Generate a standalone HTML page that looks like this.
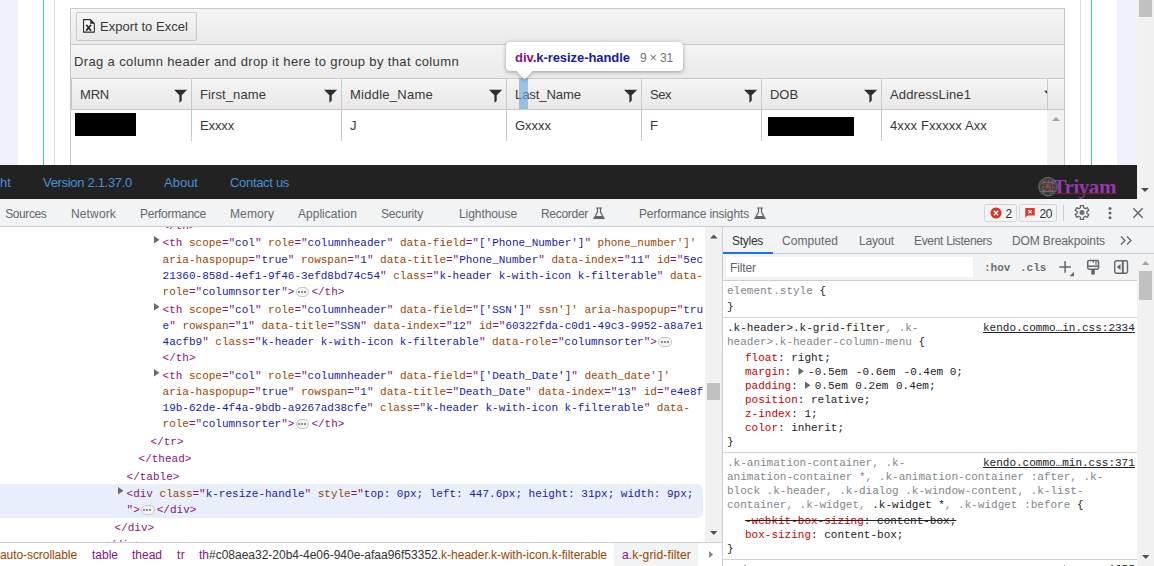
<!DOCTYPE html>
<html><head><meta charset="utf-8">
<style>
*{box-sizing:border-box;margin:0;padding:0}
html,body{width:1154px;height:566px;overflow:hidden;background:#fff}
body{position:relative;font-family:"Liberation Sans",sans-serif;font-size:14px;color:#2e2e2e}
.a{position:absolute}
.t{position:absolute;white-space:nowrap;line-height:16px;height:16px}
/* ---------- page ---------- */
.os{font-size:13px;color:#383838}
.vl{position:absolute;width:1px;background:#c9c9c9}
.flt{position:absolute;width:14px;height:14px}
/* ---------- devtools ---------- */
.ui{font-size:12px;color:#64686d}
.m{font-family:"Liberation Mono",monospace;font-size:11px;letter-spacing:0;white-space:pre;position:absolute;line-height:16px;height:16px}
.tg{color:#881280}.an{color:#994500}.av{color:#1a1aa6}.gr{color:#5f6368}
.pn{color:#c80000}.pv{color:#202124}.sel{color:#202124}.dim{color:#80868b}
.el{display:inline-block;width:13.500px;height:9.500px;border:1px solid #c6c6c6;border-radius:5px;background:#f4f4f4;vertical-align:-1.500px;margin:0 2px 0 1.500px;position:relative}
.el:after{content:"";position:absolute;left:1.200px;top:2.800px;width:2px;height:2px;background:#8a8a8a;box-shadow:3px 0 #8a8a8a,6px 0 #8a8a8a}
.ar{position:absolute;width:5.500px;height:7.500px;background:#6a6a6a;clip-path:polygon(0 0,100% 50%,0 100%)}
.tri{display:inline-block;width:5.500px;height:7.500px;background:#6a6a6a;clip-path:polygon(0 0,100% 50%,0 100%);margin:0 -2.400px 0 .6px;vertical-align:0}
</style></head><body>
<!-- PAGE -->
<div class="a" style="left:0;top:0;width:18px;height:165px;background:#eff2fb"></div>
<div class="a" style="left:43px;top:0;width:1px;height:165px;background:#3ccdba"></div>
<div class="a" style="left:54px;top:0;width:1px;height:165px;background:#dedede"></div>
<div class="a" style="left:1080px;top:0;width:1px;height:165px;background:#dedede"></div>
<div class="a" style="left:1091px;top:0;width:1px;height:165px;background:#3ccdba"></div>
<div class="a" style="left:1117px;top:0;width:20px;height:165px;background:#eff2fb"></div>
<div class="a" style="left:1137px;top:0;width:17px;height:199px;background:#f1f1f1"></div>
<div class="a" style="left:1139px;top:0;width:13px;height:17px;background:#c1c1c1"></div>
<div class="a" style="left:1141px;top:188px;width:0;height:0;border-top:4px solid #505050;border-left:4px solid transparent;border-right:4px solid transparent"></div>
<!-- grid -->
<div class="a" style="left:70px;top:8px;width:995px;height:157px;border:1px solid #c9c9c9;border-bottom:none;background:#fff"></div>
<div class="a" style="left:71px;top:9px;width:993px;height:35px;background:linear-gradient(#f5f5f5,#ebe9e9)"></div>
<div class="a" style="left:71px;top:44px;width:993px;height:1px;background:#c9c9c9"></div>
<div class="a" style="left:76px;top:12px;width:121px;height:29px;border:1px solid #c9c9c9;border-radius:2px;background:linear-gradient(#f5f5f5,#e9e9e9)"></div>
<svg class="a" style="left:82px;top:18px" width="14" height="16" viewBox="0 0 14 16"><path d="M1.600 1.600h6.800l3.900 3.900v8.600H1.600z" fill="#fbfbfb" stroke="#2a2a2a" stroke-width="1.100"/><path d="M8.200 1.600l4.100 4.100H8.200z" fill="#2a2a2a"/><path d="M4.200 6.800l4.800 5.800M9 6.800l-4.800 5.800" stroke="#2a2a2a" stroke-width="1.700"/></svg>
<div class="t os" style="letter-spacing:0.037px;left:100px;top:19px">Export to Excel</div>
<div class="a" style="left:71px;top:45px;width:993px;height:33px;background:linear-gradient(#f5f5f5,#ebe9e9)"></div>
<div class="a" style="left:71px;top:78px;width:993px;height:1px;background:#c9c9c9"></div>
<div class="t os" style="letter-spacing:0.364px;left:74px;top:54px">Drag a column header and drop it here to group by that column</div>
<div class="a" style="left:71px;top:79px;width:993px;height:30px;background:linear-gradient(#f5f5f5,#e9e7e7)"></div>
<div class="a" style="left:71px;top:109px;width:993px;height:1px;background:#c9c9c9"></div>
<div class="a" style="left:1047px;top:110px;width:17px;height:55px;background:#f1f1f1"></div>
<div class="a" style="left:1047px;top:79px;width:1px;height:30px;background:#c9c9c9"></div>
<div class="a" style="left:1051.500px;top:117px;width:0;height:0;border-bottom:4px solid #a3a3a3;border-left:4px solid transparent;border-right:4px solid transparent"></div>
<div class="vl" style="left:71px;top:79px;height:30px"></div>
<div class="vl" style="left:191px;top:79px;height:62px"></div>
<div class="vl" style="left:341px;top:79px;height:62px"></div>
<div class="vl" style="left:506px;top:79px;height:62px"></div>
<div class="vl" style="left:641px;top:79px;height:62px"></div>
<div class="vl" style="left:761px;top:79px;height:62px"></div>
<div class="vl" style="left:881px;top:79px;height:62px"></div>
<div class="t os" style="letter-spacing:-0.203px;left:80px;top:87px">MRN</div>
<div class="t os" style="letter-spacing:0.097px;left:200px;top:87px">First_name</div>
<div class="t os" style="letter-spacing:0.254px;left:350px;top:87px">Middle_Name</div>
<div class="t os" style="letter-spacing:-0.054px;left:515px;top:87px">Last_Name</div>
<div class="t os" style="letter-spacing:-0.469px;left:650px;top:87px">Sex</div>
<div class="t os" style="letter-spacing:-0.057px;left:770px;top:87px">DOB</div>
<div class="t os" style="letter-spacing:0.125px;left:890px;top:87px">AddressLine1</div>
<svg class="flt" style="left:174px;top:89px" viewBox="0 0 14 14"><path d="M0 .7h13.200l-5.500 5.500v5.500l-2.300 2.100v-7.600z" fill="#2e2e2e"/></svg>
<svg class="flt" style="left:324px;top:89px" viewBox="0 0 14 14"><path d="M0 .7h13.200l-5.500 5.500v5.500l-2.300 2.100v-7.600z" fill="#2e2e2e"/></svg>
<svg class="flt" style="left:489px;top:89px" viewBox="0 0 14 14"><path d="M0 .7h13.200l-5.500 5.500v5.500l-2.300 2.100v-7.600z" fill="#2e2e2e"/></svg>
<svg class="flt" style="left:624px;top:89px" viewBox="0 0 14 14"><path d="M0 .7h13.200l-5.500 5.500v5.500l-2.300 2.100v-7.600z" fill="#2e2e2e"/></svg>
<svg class="flt" style="left:744px;top:89px" viewBox="0 0 14 14"><path d="M0 .7h13.200l-5.500 5.500v5.500l-2.300 2.100v-7.600z" fill="#2e2e2e"/></svg>
<svg class="flt" style="left:864px;top:89px" viewBox="0 0 14 14"><path d="M0 .7h13.200l-5.500 5.500v5.500l-2.300 2.100v-7.600z" fill="#2e2e2e"/></svg>
<div class="a" style="left:1044px;top:90px;width:3px;height:4px;overflow:hidden"><svg width="14" height="14" viewBox="0 0 14 14"><path d="M0 .7h13.200l-5.500 5.500v5.500l-2.300 2.100v-7.600z" fill="#2e2e2e"/></svg></div>
<!-- data row -->
<div class="a" style="left:75px;top:113px;width:61px;height:23px;background:#000"></div>
<div class="a" style="left:768px;top:117px;width:86px;height:19px;background:#000"></div>
<div class="t os" style="letter-spacing:-0.134px;left:200px;top:118px">Exxxx</div>
<div class="t os" style="left:350px;top:118px">J</div>
<div class="t os" style="letter-spacing:-0.025px;left:515px;top:118px">Gxxxx</div>
<div class="t os" style="left:650px;top:118px">F</div>
<div class="t os" style="letter-spacing:0.109px;left:890px;top:118px">4xxx Fxxxxx Axx</div>
<!-- resize handle + tooltip -->
<div class="a" style="left:519px;top:78px;width:9px;height:31px;background:rgba(111,168,220,.66)"></div>
<div class="a" style="left:506px;top:42px;width:177px;height:29px;background:#fff;border-radius:4px;box-shadow:0 1px 4px rgba(0,0,0,.35)"></div>
<div class="a" style="left:519px;top:66px;width:11px;height:11px;background:#fff;transform:rotate(45deg);box-shadow:2px 2px 3px rgba(0,0,0,.18)"></div>
<div class="a" style="left:508px;top:58px;width:40px;height:12px;background:#fff"></div>
<div class="t" style="letter-spacing:-0.058px;left:515px;top:50px;font-size:13px;font-weight:bold;color:#1a1aa6"><span style="color:#881280">div</span>.k-resize-handle</div>
<div class="t" style="letter-spacing:-0.117px;left:640px;top:50px;font-size:12px;color:#737373">9 × 31</div>
<!-- footer -->
<div class="a" style="left:0;top:165px;width:1137px;height:34px;background:#222"></div>
<div class="t" style="letter-spacing:0.078px;left:0;top:175px;font-size:13px;color:#4a8fd6">ht</div>
<div class="t" style="letter-spacing:-0.311px;left:43px;top:175px;font-size:13px;color:#4a8fd6">Version 2.1.37.0</div>
<div class="t" style="letter-spacing:0.003px;left:164px;top:175px;font-size:13px;color:#4a8fd6">About</div>
<div class="t" style="letter-spacing:-0.316px;left:230px;top:175px;font-size:13px;color:#4a8fd6">Contact us</div>
<svg class="a" style="left:1038px;top:176px" width="21" height="22" viewBox="0 0 21 22"><circle cx="10" cy="10.700" r="9.600" fill="#3b3b3b"/><g fill="none" stroke="#777" stroke-width=".6"><circle cx="10" cy="10.700" r="9.300"/><ellipse cx="10" cy="10.700" rx="5" ry="9.300"/><ellipse cx="10" cy="10.700" rx="9.300" ry="4.500"/><path d="M1.500 6h17M1.500 15.500h17M3.500 3.500l13 14.500M16.500 3.500l-13 14.500"/></g><path d="M3 11.200h4l1-1.200 1 2.200 1.300-8 1.300 12.500 1-6.500 1 1.200h4" fill="none" stroke="#c4493c" stroke-width=".7" opacity=".85"/></svg>
<div class="t" style="letter-spacing:-0.435px;left:1052.500px;top:174.500px;font-family:'Liberation Serif',serif;font-weight:bold;font-size:21px;line-height:24px;height:24px;color:#9238ad">Triyam</div>
<div class="a" style="left:1056px;top:193.400px;width:60px;height:1px;background:#7a1d33"></div>
<!-- toolbar -->
<div class="a" style="left:0;top:199px;width:1154px;height:27px;background:#f1f3f4"></div>
<div class="a" style="left:0;top:226px;width:1154px;height:1px;background:#cbcdd1"></div>
<div class="t ui" style="letter-spacing:-0.433px;left:5.300px;top:206px">Sources</div>
<div class="t ui" style="letter-spacing:0.141px;left:71px;top:206px">Network</div>
<div class="t ui" style="letter-spacing:-0.246px;left:140px;top:206px">Performance</div>
<div class="t ui" style="letter-spacing:0.109px;left:230px;top:206px">Memory</div>
<div class="t ui" style="letter-spacing:0.026px;left:298px;top:206px">Application</div>
<div class="t ui" style="letter-spacing:-0.170px;left:381px;top:206px">Security</div>
<div class="t ui" style="letter-spacing:-0.072px;left:459px;top:206px">Lighthouse</div>
<div class="t ui" style="letter-spacing:-0.295px;left:541px;top:206px">Recorder</div>
<div class="t ui" style="letter-spacing:-0.136px;left:639px;top:206px">Performance insights</div>
<svg class="a" style="left:593px;top:207px" width="12" height="13" viewBox="0 0 12 13"><path d="M3 1h6M4.500 1v4L1 11.500h10L7.500 5V1" fill="none" stroke="#5f6368" stroke-width="1.200"/><path d="M2.700 9h6.600l1.300 2.300H1.400z" fill="#5f6368"/></svg>
<svg class="a" style="left:754px;top:207px" width="12" height="13" viewBox="0 0 12 13"><path d="M3 1h6M4.500 1v4L1 11.500h10L7.500 5V1" fill="none" stroke="#5f6368" stroke-width="1.200"/><path d="M2.700 9h6.600l1.300 2.300H1.400z" fill="#5f6368"/></svg>
<!-- badges -->
<div class="a" style="left:984px;top:204px;width:33px;height:18px;border:1px solid #d3d5d8;border-radius:2.500px;background:#f2f3f5"></div>
<div class="a" style="left:1019px;top:204px;width:38px;height:18px;border:1px solid #d3d5d8;border-radius:2.500px;background:#f2f3f5"></div>
<svg class="a" style="left:990px;top:207px" width="12" height="12" viewBox="0 0 12 12"><circle cx="6" cy="6" r="5.5" fill="#d93025"/><path d="M3.800 3.800l4.400 4.400M8.200 3.800l-4.400 4.400" stroke="#fff" stroke-width="1.4"/></svg>
<div class="t" style="left:1005.500px;top:206px;font-size:12px;color:#303134">2</div>
<svg class="a" style="left:1025px;top:208px" width="10" height="10" viewBox="0 0 10 10"><path d="M.3 0h9.400v7.600H2.600L.3 9.800z" fill="#dc362e"/><path d="M3.400 2.200l3.200 3.200M6.600 2.200l-3.200 3.200" stroke="#fff" stroke-width="1.200"/></svg>
<div class="t" style="letter-spacing:-0.430px;left:1039.500px;top:206px;font-size:12px;color:#303134">20</div>
<div class="a" style="left:1063px;top:205px;width:1px;height:16px;background:#cbcdd1"></div>
<svg class="a" style="left:1074px;top:204px" width="16" height="17" viewBox="0 0 16 17"><path d="M9.63 3.77L9.60 1.58L6.40 1.58L6.37 3.77L4.72 4.73L2.81 3.66L1.21 6.42L3.09 7.55L3.09 9.45L1.21 10.58L2.81 13.34L4.72 12.27L6.37 13.23L6.40 15.42L9.60 15.42L9.63 13.23L11.28 12.27L13.19 13.34L14.79 10.58L12.91 9.45L12.91 7.55L14.79 6.42L13.19 3.66L11.28 4.73Z" fill="none" stroke="#666" stroke-width="1.300" stroke-linejoin="round"/><circle cx="8" cy="8.500" r="2.500" fill="#6e6e6e"/></svg>
<svg class="a" style="left:1106px;top:205px" width="8" height="16" viewBox="0 0 8 16"><g fill="#666"><circle cx="4" cy="3.400" r="1.500"/><circle cx="4" cy="8.100" r="1.500"/><circle cx="4" cy="12.700" r="1.500"/></g></svg>
<svg class="a" style="left:1132px;top:207px" width="12" height="12" viewBox="0 0 12 12"><path d="M1.300 1.200l9.400 9.500M10.700 1.200l-9.400 9.500" stroke="#666" stroke-width="1.400"/></svg>
<div class="a" style="left:0;top:227px;width:705px;height:315px;overflow:hidden;background:#fff">
<div class="a" style="left:0;top:257px;width:703px;height:34px;background:#e8effa;border-radius:0 6px 6px 0"></div>
<div class="m tg" style="left:162.60px;top:-9px;letter-spacing:-0.012px">&lt;/th&gt;</div>
<div class="ar" style="left:154px;top:9px"></div>
<div class="m tg" style="left:162.60px;top:8px;letter-spacing:-0.012px">&lt;th <span class="an">scope</span>="<span class="av">col</span>" <span class="an">role</span>="<span class="av">columnheader</span>" <span class="an">data-field</span>="<span class="av">['Phone_Number']</span>" <span class="an">phone_number']'</span></div>
<div class="m tg" style="left:162.60px;top:25px;letter-spacing:-0.012px"><span class="an">aria-haspopup</span>="<span class="av">true</span>" <span class="an">rowspan</span>="<span class="av">1</span>" <span class="an">data-title</span>="<span class="av">Phone_Number</span>" <span class="an">data-index</span>="<span class="av">11</span>" <span class="an">id</span>="<span class="av">5ec</span></div>
<div class="m tg" style="left:162.60px;top:41px;letter-spacing:-0.012px"><span class="av">21360-858d-4ef1-9f46-3efd8bd74c54</span>" <span class="an">class</span>="<span class="av">k-header k-with-icon k-filterable</span>" <span class="an">data-</span></div>
<div class="m tg" style="left:162.60px;top:57px;letter-spacing:-0.012px"><span class="an">role</span>="<span class="av">columnsorter</span>"&gt;<span class="el"></span>&lt;/th&gt;</div>
<div class="ar" style="left:154px;top:76px"></div>
<div class="m tg" style="left:162.60px;top:75px;letter-spacing:-0.012px">&lt;th <span class="an">scope</span>="<span class="av">col</span>" <span class="an">role</span>="<span class="av">columnheader</span>" <span class="an">data-field</span>="<span class="av">['SSN']</span>" <span class="an">ssn']'</span> <span class="an">aria-haspopup</span>="<span class="av">tru</span></div>
<div class="m tg" style="left:162.60px;top:91px;letter-spacing:-0.012px"><span class="av">e</span>" <span class="an">rowspan</span>="<span class="av">1</span>" <span class="an">data-title</span>="<span class="av">SSN</span>" <span class="an">data-index</span>="<span class="av">12</span>" <span class="an">id</span>="<span class="av">60322fda-c0d1-49c3-9952-a8a7e1</span></div>
<div class="m tg" style="left:162.60px;top:107px;letter-spacing:-0.012px"><span class="av">4acfb9</span>" <span class="an">class</span>="<span class="av">k-header k-with-icon k-filterable</span>" <span class="an">data-role</span>="<span class="av">columnsorter</span>"&gt;<span class="el"></span></div>
<div class="m tg" style="left:162.60px;top:123px;letter-spacing:-0.012px">&lt;/th&gt;</div>
<div class="ar" style="left:154px;top:142px"></div>
<div class="m tg" style="left:162.60px;top:141px;letter-spacing:-0.012px">&lt;th <span class="an">scope</span>="<span class="av">col</span>" <span class="an">role</span>="<span class="av">columnheader</span>" <span class="an">data-field</span>="<span class="av">['Death_Date']</span>" <span class="an">death_date']'</span></div>
<div class="m tg" style="left:162.60px;top:157px;letter-spacing:-0.012px"><span class="an">aria-haspopup</span>="<span class="av">true</span>" <span class="an">rowspan</span>="<span class="av">1</span>" <span class="an">data-title</span>="<span class="av">Death_Date</span>" <span class="an">data-index</span>="<span class="av">13</span>" <span class="an">id</span>="<span class="av">e4e8f</span></div>
<div class="m tg" style="left:162.60px;top:173px;letter-spacing:-0.012px"><span class="av">19b-62de-4f4a-9bdb-a9267ad38cfe</span>" <span class="an">class</span>="<span class="av">k-header k-with-icon k-filterable</span>" <span class="an">data-</span></div>
<div class="m tg" style="left:162.60px;top:189px;letter-spacing:-0.012px"><span class="an">role</span>="<span class="av">columnsorter</span>"&gt;<span class="el"></span>&lt;/th&gt;</div>
<div class="m tg" style="left:150.60px;top:207px;letter-spacing:-0.012px">&lt;/tr&gt;</div>
<div class="m tg" style="left:138.60px;top:224px;letter-spacing:-0.012px">&lt;/thead&gt;</div>
<div class="m tg" style="left:126.60px;top:242px;letter-spacing:-0.012px">&lt;/table&gt;</div>
<div class="ar" style="left:118px;top:260px"></div>
<div class="m tg" style="left:126.60px;top:259px;letter-spacing:-0.012px">&lt;div <span class="an">class</span>="<span class="av">k-resize-handle</span>" <span class="an">style</span>="<span class="av">top: 0px; left: 447.6px; height: 31px; width: 9px;</span></div>
<div class="m tg" style="left:126.60px;top:275px;letter-spacing:-0.012px">"&gt;<span class="el"></span>&lt;/div&gt;</div>
<div class="m tg" style="left:114.60px;top:293px;letter-spacing:-0.012px">&lt;/div&gt;</div>
<div class="m tg" style="left:102.60px;top:310px;letter-spacing:-0.012px">&lt;/div&gt;</div>
</div>
<!-- elements scrollbar -->
<div class="a" style="left:705px;top:227px;width:17px;height:315px;background:#f1f1f1"></div>
<div class="a" style="left:707px;top:383px;width:13px;height:17px;background:#c1c1c1"></div>
<div class="a" style="left:710px;top:234.500px;width:7.500px;height:4px;background:#505050;clip-path:polygon(50% 0,100% 100%,0 100%)"></div>
<div class="a" style="left:710px;top:531px;width:7.500px;height:4px;background:#505050;clip-path:polygon(0 0,100% 0,50% 100%)"></div>
<div class="a" style="left:722px;top:227px;width:1px;height:339px;background:#cbcdd1"></div>
<!-- breadcrumbs -->
<div class="a" style="left:0;top:542px;width:722px;height:1px;background:#cbcdd1"></div>
<div class="a" style="left:0;top:543px;width:722px;height:23px;background:#fff"></div>
<div class="a" style="left:614px;top:543px;width:84px;height:23px;background:#f1f3f4"></div>
<div class="t" style="letter-spacing:-0.070px;left:0;top:547px;font-size:12px;color:#994500">auto-scrollable</div>
<div class="t" style="letter-spacing:-0.006px;left:92px;top:547px;font-size:12px;color:#881280">table</div>
<div class="t" style="letter-spacing:-0.006px;left:132px;top:547px;font-size:12px;color:#881280">thead</div>
<div class="t" style="letter-spacing:0.328px;left:177px;top:547px;font-size:12px;color:#881280">tr</div>
<div class="t" style="letter-spacing:-0.004px;left:199px;top:547px;font-size:12px;color:#994500"><span style="color:#881280">th</span><span style="color:#333">#c08aea32-20b4-4e06-940e-afaa96f53352</span>.k-header.k-with-icon.k-filterable</div>
<div class="t" style="letter-spacing:0.153px;left:622px;top:547px;font-size:12px;color:#994500"><span style="color:#881280">a</span>.k-grid-filter</div>
<div class="a" style="left:708.800px;top:551px;width:4.500px;height:7px;background:#80868b;clip-path:polygon(0 0,100% 50%,0 100%)"></div>
<!-- styles pane -->
<div class="a" style="left:723px;top:227px;width:431px;height:26px;background:#f1f3f4"></div>
<div class="a" style="left:723px;top:253px;width:431px;height:1px;background:#cbcdd1"></div>
<div class="a" style="left:723px;top:252px;width:50px;height:2px;background:#1a73e8"></div>
<div class="t ui" style="letter-spacing:-0.281px;left:732px;top:233px;color:#333">Styles</div>
<div class="t ui" style="letter-spacing:0.078px;left:782px;top:233px">Computed</div>
<div class="t ui" style="letter-spacing:-0.172px;left:859px;top:233px">Layout</div>
<div class="t ui" style="letter-spacing:-0.315px;left:914px;top:233px">Event Listeners</div>
<div class="t ui" style="letter-spacing:-0.114px;left:1012px;top:233px">DOM Breakpoints</div>
<svg class="a" style="left:1120px;top:236px" width="12" height="9" viewBox="0 0 12 9"><path d="M1 .5l4 4-4 4M7 .5l4 4-4 4" fill="none" stroke="#5f6368" stroke-width="1.300"/></svg>
<div class="a" style="left:723px;top:254px;width:414px;height:26px;background:#f1f3f4"></div>
<div class="a" style="left:723px;top:280px;width:414px;height:1px;background:#cbcdd1"></div>
<div class="a" style="left:726px;top:257px;width:247px;height:20px;background:#fff"></div>
<div class="t ui" style="letter-spacing:-0.112px;left:730px;top:260px;color:#5f6368">Filter</div>
<div class="m" style="left:984px;top:260px;color:#6b6f74;font-weight:bold">:hov</div>
<div class="m" style="left:1020px;top:260px;color:#6b6f74;font-weight:bold">.cls</div>
<svg class="a" style="left:1059px;top:260px" width="16" height="17" viewBox="0 0 16 17"><path d="M6.100 1v11.800M.3 6.900h11.600" stroke="#666" stroke-width="1.500"/><path d="M15 11.800v4.400h-4.600z" fill="#666"/></svg>
<svg class="a" style="left:1086px;top:259px" width="15" height="17" viewBox="0 0 15 17"><rect x="1.700" y="1.500" width="10.800" height="8.700" rx="1.400" fill="none" stroke="#666" stroke-width="1.500"/><path d="M1.700 7.200h10.800" stroke="#666" stroke-width="1.500"/><path d="M7.300 1.500v2.200M10 1.500v4.200" stroke="#707070" stroke-width="1.300"/><rect x="5.200" y="10.400" width="3.700" height="5.400" rx="1.600" fill="#666"/></svg>
<svg class="a" style="left:1114px;top:260px" width="15" height="14" viewBox="0 0 15 14"><rect x=".7" y=".8" width="12.800" height="12.400" rx="1.600" fill="none" stroke="#666" stroke-width="1.400"/><path d="M8.800 1v12" stroke="#666" stroke-width="1.900"/><path d="M6.500 4.100v5.800l-3.700-2.900z" fill="#666"/></svg>
<!-- styles scrollbar -->
<div class="a" style="left:1137px;top:254px;width:17px;height:312px;background:#f1f1f1"></div>
<div class="a" style="left:1139px;top:271px;width:13px;height:29px;background:#c1c1c1"></div>
<div class="a" style="left:1141.800px;top:261px;width:7.500px;height:4px;background:#a3a3a3;clip-path:polygon(50% 0,100% 100%,0 100%)"></div>
<div class="a" style="left:1142px;top:555px;width:7.500px;height:4px;background:#505050;clip-path:polygon(0 0,100% 0,50% 100%)"></div>
<div class="m pv" style="left:727px;top:284px;line-height:14px;height:14px"><span class="dim">element.style</span> {</div>
<div class="m pv" style="left:727px;top:300px;line-height:14px;height:14px">}</div>
<div class="a" style="left:723px;top:317px;width:414px;height:1px;background:#d0d2d6"></div>
<div class="m pv" style="left:727px;top:321px;line-height:14px;height:14px">.k-header&gt;.k-grid-filter<span class="dim">, .k-</span></div>
<div class="m pv" style="left:727px;top:335px;line-height:14px;height:14px"><span class="dim">header&gt;.k-header-column-menu</span> {</div>
<div class="m" style="left:983px;top:321px;line-height:14px;height:14px;color:#202124;text-decoration:underline">kendo.commo…in.css:2334</div>
<div class="m pv" style="left:745px;top:351px;line-height:14px;height:14px"><span class="pn">float</span>: right;</div>
<div class="m pv" style="left:745px;top:365px;line-height:14px;height:14px"><span class="pn">margin</span>: <span class="tri"></span> -0.5em<span style="letter-spacing:1.5px"> </span>-0.6em<span style="letter-spacing:1.5px"> </span>-0.4em 0;</div>
<div class="m pv" style="left:745px;top:379px;line-height:14px;height:14px"><span class="pn">padding</span>: <span class="tri"></span> 0.5em<span style="letter-spacing:1px"> </span>0.2em<span style="letter-spacing:1px"> </span>0.4em;</div>
<div class="m pv" style="left:745px;top:393px;line-height:14px;height:14px"><span class="pn">position</span>: relative;</div>
<div class="m pv" style="left:745px;top:407px;line-height:14px;height:14px"><span class="pn">z-index</span>: 1;</div>
<div class="m pv" style="left:745px;top:421px;line-height:14px;height:14px"><span class="pn">color</span>: inherit;</div>
<div class="m pv" style="left:727px;top:435px;line-height:14px;height:14px">}</div>
<div class="a" style="left:723px;top:452px;width:414px;height:1px;background:#d0d2d6"></div>
<div class="m pv" style="left:727px;top:456px;line-height:14px;height:14px"><span class="dim">.k-animation-container, .k-</span></div>
<div class="m" style="left:983px;top:456px;line-height:14px;height:14px;color:#202124;text-decoration:underline">kendo.commo…min.css:371</div>
<div class="m pv" style="left:727px;top:470px;line-height:14px;height:14px"><span class="dim">animation-container *, .k-animation-container :after, .k-</span></div>
<div class="m pv" style="left:727px;top:484px;line-height:14px;height:14px"><span class="dim">block .k-header, .k-dialog .k-window-content, .k-list-</span></div>
<div class="m pv" style="left:727px;top:498px;line-height:14px;height:14px"><span class="dim">container, .k-widget, </span>.k-widget *<span class="dim">, .k-widget :before</span> {</div>
<div class="m pv" style="left:745px;top:514px;line-height:14px;height:14px"><span style="text-decoration:line-through;color:#202124"><span class="pn">-webkit-box-sizing</span>: content-box;</span></div>
<div class="m pv" style="left:745px;top:528px;line-height:14px;height:14px"><span class="pn">box-sizing</span>: content-box;</div>
<div class="m pv" style="left:727px;top:542px;line-height:14px;height:14px">}</div>
<div class="a" style="left:723px;top:559px;width:414px;height:1px;background:#d0d2d6"></div>
<div class="m" style="left:1108.600px;top:562px;line-height:14px;height:14px;color:#202124">1055</div>
<div class="a" style="left:744px;top:565px;width:2px;height:1px;background:#9a9a9a"></div>
<div class="a" style="left:1064px;top:565px;width:1px;height:1px;background:#9a9a9a"></div>

</body></html>
